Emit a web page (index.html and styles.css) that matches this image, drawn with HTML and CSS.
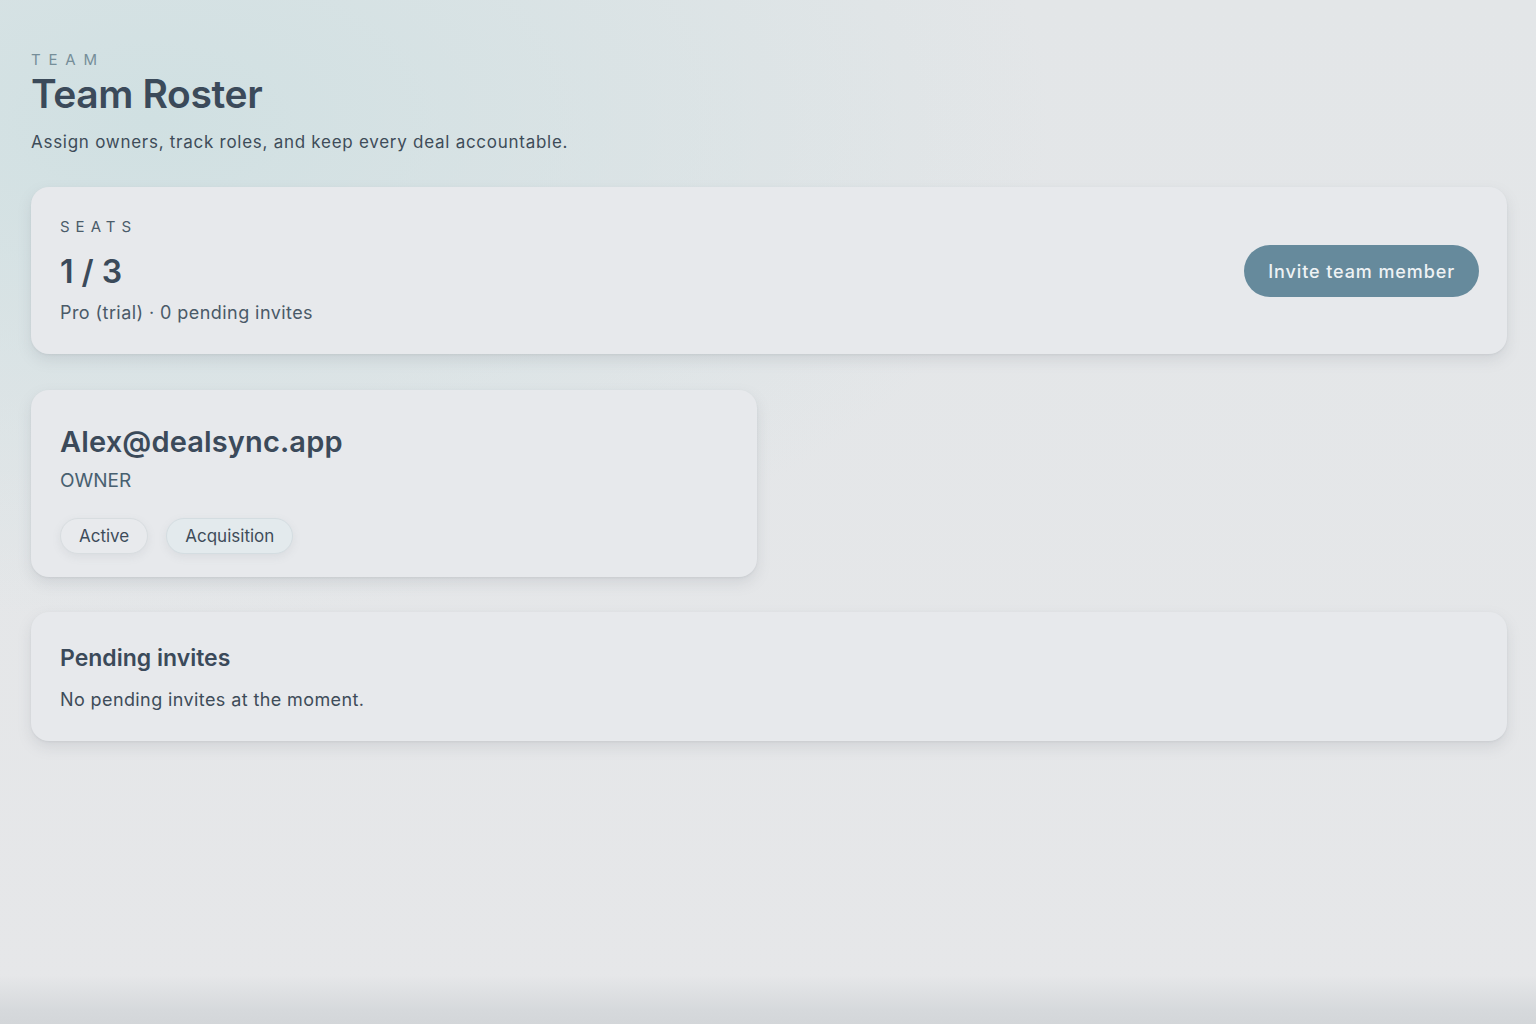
FILE: index.html
```html
<!DOCTYPE html>
<html lang="en">
<head>
<meta charset="utf-8">
<title>Team Roster</title>
<link rel="stylesheet" href="styles.css">
</head>
<body>
<div class="page">
  <header class="head">
    <div class="eyebrow">TEAM</div>
    <h1 class="title">Team Roster</h1>
    <p class="subtitle">Assign owners, track roles, and keep every deal accountable.</p>
  </header>

  <section class="card seats">
    <div class="seats-info">
      <div class="eyebrow small">SEATS</div>
      <div class="count">1 / 3</div>
      <div class="plan">Pro (trial) · 0 pending invites</div>
    </div>
    <button class="btn">Invite team member</button>
  </section>

  <div class="members">
    <section class="card member">
      <div class="email">Alex@dealsync.app</div>
      <div class="role">OWNER</div>
      <div class="tags">
        <span class="tag">Active</span>
        <span class="tag tinted">Acquisition</span>
      </div>
    </section>
  </div>

  <section class="card pending">
    <h2 class="pending-title">Pending invites</h2>
    <p class="pending-text">No pending invites at the moment.</p>
  </section>
</div>
</body>
</html>
```

FILE: styles.css
```css
* { box-sizing: border-box; }
html, body { height: 100%; }
body {
  margin: 0;
  font-family: Inter, "Noto Sans", sans-serif;
  color: #3a4a5a;
  background:
    linear-gradient(180deg, rgba(0,0,0,0) 0, rgba(0,0,0,0) 975px, #d6d9dc 1010px, #d3d6d9 1024px),
    radial-gradient(ellipse 900px 500px at 150px 120px, #d0e0e2 0%, rgba(208,224,226,0.6) 40%, rgba(230,231,233,0) 100%),
    linear-gradient(180deg, #e3e6e8 0%, #e6e7e9 100%);
  min-height: 1024px;
}
.page {
  padding: 51px 29px 0 31px;
  display: flex;
  flex-direction: column;
}
.head { margin-bottom: 34px; }
.eyebrow {
  font-size: 15px;
  letter-spacing: 0.52em;
  color: #768e99;
  line-height: 18px;
}
.eyebrow.small { color: #4b5c6a; letter-spacing: 0.4em; }
.title {
  margin: 3px 0 0;
  font-size: 39px;
  font-weight: 600;
  line-height: 44px;
  color: #3b4a5a;
  letter-spacing: -0.01em;
}
.subtitle {
  margin: 15px 0 0;
  font-size: 17px;
  line-height: 22px;
  letter-spacing: 0.043em;
  color: #3e4c59;
}
.card {
  background: #e7e9ec;
  border-radius: 18px;
  box-shadow: 0 6px 14px rgba(120,130,140,0.18), 0 1px 2px rgba(120,130,140,0.12);
}
.seats {
  display: flex;
  align-items: center;
  justify-content: space-between;
  padding: 29px 28px 28px 29px;
  height: 167px;
}
.seats-info { display: flex; flex-direction: column; }
.count {
  margin-top: 17px;
  font-size: 32px;
  font-weight: 600;
  line-height: 38px;
  color: #3b4a5a;
}
.plan {
  margin-top: 11px;
  font-size: 18px;
  line-height: 22px;
  letter-spacing: 0.024em;
  color: #4a5a68;
}
.btn {
  font-family: inherit;
  border: none;
  background: #668a9c;
  color: #eef2f4;
  font-size: 18px;
  font-weight: 500;
  letter-spacing: 0.05em;
  height: 52px;
  padding: 0 24px;
  border-radius: 26px;
}
.members {
  display: grid;
  grid-template-columns: 1fr 1fr;
  gap: 24px;
  margin-top: 36px;
}
.member {
  padding: 36px 29px 22px;
  height: 187px;
}
.email {
  font-size: 29px;
  font-weight: 600;
  line-height: 32px;
  letter-spacing: 0.005em;
  color: #3b4a5a;
}
.role {
  margin-top: 11px;
  font-size: 19px;
  line-height: 24px;
  color: #486070;
}
.tags { display: flex; gap: 18px; margin-top: 25px; }
.tag {
  height: 36px;
  display: inline-flex;
  align-items: center;
  padding: 0 18px;
  border-radius: 18px;
  border: 1px solid #d8dde0;
  background: #e8eaed;
  font-size: 17px;
  color: #3e4c5a;
  box-shadow: 0 3px 8px rgba(120,130,140,0.12);
}
.tag.tinted { background: #e3eaed; border-color: #d4dde1; }
.pending {
  margin-top: 35px;
  padding: 32px 29px 30px;
  height: 129px;
}
.pending-title {
  margin: 0;
  font-size: 23px;
  font-weight: 600;
  line-height: 28px;
  color: #3b4a5a;
}
.pending-text {
  margin: 17px 0 0;
  font-size: 18px;
  line-height: 22px;
  letter-spacing: 0.022em;
  color: #3e4c59;
}
```
